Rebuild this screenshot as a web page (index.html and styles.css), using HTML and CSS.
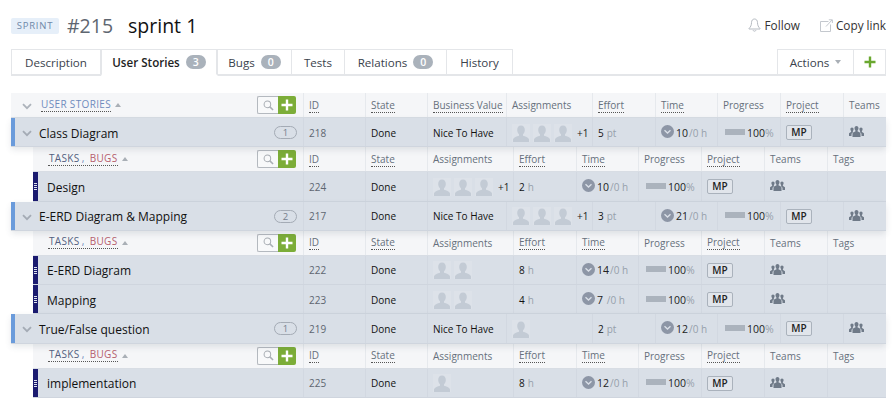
FILE: index.html
```html
<!DOCTYPE html>
<html lang="en">
<head>
<meta charset="utf-8">
<title>Sprint 1</title>
<link rel="stylesheet" href="styles.css">
</head>
<body>
<svg class="sprite" width="0" height="0" aria-hidden="true">
  <symbol id="chev" viewBox="0 0 10 7"><path d="M1 1.2 5 5.2 9 1.2" fill="none" stroke="currentColor" stroke-width="1.8"/></symbol>
  <symbol id="user" viewBox="0 0 18 18"><path d="M9 1.500c2.500 0 3.800 1.900 3.800 4.500 0 1.800-.8 3.400-1.800 4.300v1.500c2.200.8 5.300 1.500 6 3.500V18H1v-2.700c.7-2 3.800-2.700 6-3.500v-1.500C6 9.400 5.200 7.800 5.200 6c0-2.600 1.300-4.500 3.800-4.500z" fill="currentColor"/></symbol>
  <symbol id="clock" viewBox="0 0 13 13"><circle cx="6.500" cy="6.500" r="6.500" fill="currentColor"/><path d="M3.500 5.200 6.500 8 9.500 5.200" fill="none" stroke="#d9dfe7" stroke-width="1.400"/></symbol>
  <symbol id="team" viewBox="0 0 15 11"><path d="M7.500 0c1.300 0 2 1 2 2.300 0 1-.4 1.800-.9 2.300v1c1.200.4 2.600.9 2.900 1.800V11h-8V7.400c.3-.9 1.700-1.400 2.900-1.800v-1c-.5-.5-.9-1.300-.9-2.300C5.500 1 6.200 0 7.500 0z" fill="currentColor"/><path d="M3 1.500c1 0 1.600.8 1.600 1.800 0 .8-.3 1.400-.7 1.800v.8l.6.2C3.500 6.600 2.500 7.200 2.500 8.500V10H0V7.600c.2-.7 1.300-1.100 2.100-1.500V5.100C1.700 4.700 1.400 4.100 1.400 3.300 1.400 2.300 2 1.500 3 1.500zM12 1.500c1 0 1.600.8 1.600 1.800 0 .8-.3 1.400-.7 1.800v1c.8.400 1.900.800 2.100 1.500V10h-2.500V8.500c0-1.300-1-1.900-2-2.400l.6-.2v-.8c-.4-.4-.7-1-.7-1.800 0-1 .6-1.800 1.600-1.800z" fill="currentColor"/></symbol>
  <symbol id="search" viewBox="0 0 12 12"><circle cx="4.800" cy="4.800" r="3.600" fill="none" stroke="currentColor" stroke-width="1.100"/><path d="M7.500 7.500 11 11" stroke="currentColor" stroke-width="1.600"/></symbol>
  <symbol id="plus" viewBox="0 0 12 12"><path d="M6 .5v11M.5 6h11" stroke="currentColor" stroke-width="2.400"/></symbol>
  <symbol id="bell" viewBox="0 0 13 14"><path d="M6.500 1C4.500 1 3.500 2.600 3.500 4.600c0 2.500-.8 4.300-2.500 5.900V11h11v-.5C10.300 8.900 9.500 7.100 9.500 4.600 9.500 2.600 8.500 1 6.500 1zM5 12.200c.3.700.8 1 1.500 1s1.200-.3 1.500-1" fill="none" stroke="currentColor"/></symbol>
  <symbol id="link" viewBox="0 0 13 13"><path d="M8.500 2.500h-8v10h10v-7" fill="none" stroke="currentColor"/><path d="M6 7.500 12 1M8.800.8H12.400V4" fill="none" stroke="currentColor"/></symbol>
</svg>

<header class="top">
  <div class="title">
    <span class="kind">SPRINT</span>
    <span class="num">#215</span>
    <span class="name">sprint 1</span>
  </div>
  <div class="links">
    <span class="lnk follow"><svg class="ico-bell"><use href="#bell"/></svg>Follow</span>
    <span class="lnk"><svg class="ico-link"><use href="#link"/></svg>Copy link</span>
  </div>
</header>

<nav class="tabs">
  <span class="tab w-desc">Description</span>
  <span class="tab on w-us">User Stories <b class="cnt">3</b></span>
  <span class="tab w-bugs">Bugs <b class="cnt">0</b></span>
  <span class="tab w-tests">Tests</span>
  <span class="tab w-rel">Relations <b class="cnt">0</b></span>
  <span class="tab w-hist">History</span>
  <span class="tab-fill"></span>
  <span class="tab w-act">Actions <i class="caret"></i></span>
  <span class="tab w-add"><svg class="ico-add"><use href="#plus"/></svg></span>
</nav>

<main class="board">
  <div class="row us head">
    <div class="c first"><svg class="chev"><use href="#chev"/></svg><span class="ttl blue">USER STORIES</span><i class="up"></i><span class="tools"><span class="srch"><svg><use href="#search"/></svg></span><span class="add"><svg><use href="#plus"/></svg></span></span></div>
    <div class="c"><span class="sort">ID</span></div><div class="c"><span class="sort">State</span></div><div class="c"><span class="sort">Business Value</span></div><div class="c">Assignments</div><div class="c"><span class="sort">Effort</span></div><div class="c"><span class="sort">Time</span></div><div class="c">Progress</div><div class="c"><span class="sort">Project</span></div><div class="c">Teams</div>
  </div>

  <div class="row us item">
    <div class="c first"><svg class="chev"><use href="#chev"/></svg><span class="nm">Class Diagram</span><span class="pill">1</span></div>
    <div class="c id">218</div><div class="c dk">Done</div><div class="c dk">Nice To Have</div>
    <div class="c av"><svg><use href="#user"/></svg><svg><use href="#user"/></svg><svg><use href="#user"/></svg><span class="more">+1</span></div>
    <div class="c dk">5<em>pt</em></div>
    <div class="c tm"><svg><use href="#clock"/></svg><span>10</span><em>/0 h</em></div>
    <div class="c pr"><i></i>100<em>%</em></div>
    <div class="c"><span class="mp">MP</span></div>
    <div class="c tm-i"><svg><use href="#team"/></svg></div>
  </div>

  <div class="row sub head">
    <div class="c first"><span class="ttl"><span class="navy">TASKS</span><span class="comma">,</span><span class="red">BUGS</span></span><i class="up"></i><span class="tools"><span class="srch"><svg><use href="#search"/></svg></span><span class="add"><svg><use href="#plus"/></svg></span></span></div>
    <div class="c"><span class="sort">ID</span></div><div class="c"><span class="sort">State</span></div><div class="c">Assignments</div><div class="c"><span class="sort">Effort</span></div><div class="c"><span class="sort">Time</span></div><div class="c">Progress</div><div class="c"><span class="sort">Project</span></div><div class="c">Teams</div><div class="c">Tags</div>
  </div>
  <div class="row sub item">
    <div class="c first"><i class="grip"></i><span class="nm">Design</span></div>
    <div class="c id">224</div><div class="c dk">Done</div>
    <div class="c av"><svg><use href="#user"/></svg><svg><use href="#user"/></svg><svg><use href="#user"/></svg><span class="more">+1</span></div>
    <div class="c dk">2<em>h</em></div>
    <div class="c tm"><svg><use href="#clock"/></svg><span>10</span><em>/0 h</em></div>
    <div class="c pr"><i></i>100<em>%</em></div>
    <div class="c"><span class="mp">MP</span></div>
    <div class="c tm-i"><svg><use href="#team"/></svg></div><div class="c"></div>
  </div>

  <div class="row us item">
    <div class="c first"><svg class="chev"><use href="#chev"/></svg><span class="nm">E-ERD Diagram &amp; Mapping</span><span class="pill">2</span></div>
    <div class="c id">217</div><div class="c dk">Done</div><div class="c dk">Nice To Have</div>
    <div class="c av"><svg><use href="#user"/></svg><svg><use href="#user"/></svg><svg><use href="#user"/></svg><span class="more">+1</span></div>
    <div class="c dk">3<em>pt</em></div>
    <div class="c tm"><svg><use href="#clock"/></svg><span>21</span><em>/0 h</em></div>
    <div class="c pr"><i></i>100<em>%</em></div>
    <div class="c"><span class="mp">MP</span></div>
    <div class="c tm-i"><svg><use href="#team"/></svg></div>
  </div>

  <div class="row sub head">
    <div class="c first"><span class="ttl"><span class="navy">TASKS</span><span class="comma">,</span><span class="red">BUGS</span></span><i class="up"></i><span class="tools"><span class="srch"><svg><use href="#search"/></svg></span><span class="add"><svg><use href="#plus"/></svg></span></span></div>
    <div class="c"><span class="sort">ID</span></div><div class="c"><span class="sort">State</span></div><div class="c">Assignments</div><div class="c"><span class="sort">Effort</span></div><div class="c"><span class="sort">Time</span></div><div class="c">Progress</div><div class="c"><span class="sort">Project</span></div><div class="c">Teams</div><div class="c">Tags</div>
  </div>
  <div class="row sub item">
    <div class="c first"><i class="grip"></i><span class="nm">E-ERD Diagram</span></div>
    <div class="c id">222</div><div class="c dk">Done</div>
    <div class="c av"><svg><use href="#user"/></svg><svg><use href="#user"/></svg></div>
    <div class="c dk">8<em>h</em></div>
    <div class="c tm"><svg><use href="#clock"/></svg><span>14</span><em>/0 h</em></div>
    <div class="c pr"><i></i>100<em>%</em></div>
    <div class="c"><span class="mp">MP</span></div>
    <div class="c tm-i"><svg><use href="#team"/></svg></div><div class="c"></div>
  </div>
  <div class="row sub item">
    <div class="c first"><i class="grip"></i><span class="nm">Mapping</span></div>
    <div class="c id">223</div><div class="c dk">Done</div>
    <div class="c av"><svg><use href="#user"/></svg><svg><use href="#user"/></svg></div>
    <div class="c dk">4<em>h</em></div>
    <div class="c tm"><svg><use href="#clock"/></svg><span>7&nbsp;</span><em>/0 h</em></div>
    <div class="c pr"><i></i>100<em>%</em></div>
    <div class="c"><span class="mp">MP</span></div>
    <div class="c tm-i"><svg><use href="#team"/></svg></div><div class="c"></div>
  </div>

  <div class="row us item">
    <div class="c first"><svg class="chev"><use href="#chev"/></svg><span class="nm">True/False question</span><span class="pill">1</span></div>
    <div class="c id">219</div><div class="c dk">Done</div><div class="c dk">Nice To Have</div>
    <div class="c av"><svg><use href="#user"/></svg></div>
    <div class="c dk">2<em>pt</em></div>
    <div class="c tm"><svg><use href="#clock"/></svg><span>12</span><em>/0 h</em></div>
    <div class="c pr"><i></i>100<em>%</em></div>
    <div class="c"><span class="mp">MP</span></div>
    <div class="c tm-i"><svg><use href="#team"/></svg></div>
  </div>

  <div class="row sub head">
    <div class="c first"><span class="ttl"><span class="navy">TASKS</span><span class="comma">,</span><span class="red">BUGS</span></span><i class="up"></i><span class="tools"><span class="srch"><svg><use href="#search"/></svg></span><span class="add"><svg><use href="#plus"/></svg></span></span></div>
    <div class="c"><span class="sort">ID</span></div><div class="c"><span class="sort">State</span></div><div class="c">Assignments</div><div class="c"><span class="sort">Effort</span></div><div class="c"><span class="sort">Time</span></div><div class="c">Progress</div><div class="c"><span class="sort">Project</span></div><div class="c">Teams</div><div class="c">Tags</div>
  </div>
  <div class="row sub item">
    <div class="c first"><i class="grip"></i><span class="nm">implementation</span></div>
    <div class="c id">225</div><div class="c dk">Done</div>
    <div class="c av"><svg><use href="#user"/></svg></div>
    <div class="c dk">8<em>h</em></div>
    <div class="c tm"><svg><use href="#clock"/></svg><span>12</span><em>/0 h</em></div>
    <div class="c pr"><i></i>100<em>%</em></div>
    <div class="c"><span class="mp">MP</span></div>
    <div class="c tm-i"><svg><use href="#team"/></svg></div><div class="c"></div>
  </div>
</main>
</body>
</html>
```
FILE: styles.css
```css
* { box-sizing: border-box; }
html, body { margin: 0; background: #fff; }
body {
  width: 892px;
  height: 410px;
  overflow: hidden;
  padding: 0 6px 0 11px;
  font-family: "Open Sans", "Noto Sans", sans-serif;
  font-size: 10px;
  color: #222;
}
.sprite { position: absolute; }
svg { display: block; }

/* header */
.top { height: 49px; display: flex; justify-content: space-between; align-items: flex-start; }
.title { display: flex; align-items: center; height: 20px; margin-top: 16px; }
.kind {
  width: 48px; height: 16px; line-height: 16px; text-align: center;
  background: #e6eff9; color: #6f88a8; font-size: 9.500px; letter-spacing: .8px; border-radius: 2px;
}
.num { margin-left: 8px; font-size: 19.500px; color: #5e6670; line-height: 20px; }
.name { margin-left: 15px; font-size: 19.500px; color: #111; line-height: 20px; }
.links { display: flex; margin-top: 16px; font-size: 11.800px; color: #333; line-height: 18px; }
.lnk { display: flex; align-items: center; }
.follow { margin-right: 20px; }
.ico-bell { width: 13px; height: 14px; margin-right: 4px; color: #b5bac1; }
.ico-link { width: 13px; height: 13px; margin-right: 3px; color: #c4c8ce; }

/* tabs */
.tabs { display: flex; height: 27px; border-bottom: 2px solid #e4e6e9; }
.tab {
  height: 27px; display: flex; align-items: center; justify-content: center;
  font-size: 11.600px; color: #3a424c;
  border: 1px solid #e4e6e9; border-left: 0; border-bottom: 2px solid #e4e6e9; background: #fff;
}
.tab:first-child { border-left: 1px solid #e4e6e9; }
.tab.on { font-weight: 600; color: #222; border-bottom-color: #fff; border-right-width: 2px; border-left: 1px solid #e4e6e9; }
.w-desc { width: 90px; } .w-us { width: 117px; } .w-bugs { width: 74px; } .w-tests { width: 53px; }
.w-rel { width: 102px; } .w-hist { width: 66px; } .w-act { width: 77px; border-left: 1px solid #e4e6e9; } .w-add { width: 32px; }
.tab-fill { flex: 1; }
.cnt {
  margin-left: 6px; width: 20px; height: 14px; line-height: 15px; border-radius: 7px;
  background: #aab2bb; color: #fff; font-size: 10.500px; font-weight: 600; text-align: center;
}
.caret { margin-left: 6px; width: 0; height: 0; border: 3px solid transparent; border-top: 4px solid #a9afb6; border-bottom: 0; }
.ico-add { width: 12px; height: 12px; color: #6aa82f; }

/* board */
.board { margin-top: 17px; }
.row { display: grid; }
.us { grid-template-columns: 292px 62px 62px 79px 86px 63px 62px 63px 63px 43px; }
.sub { grid-template-columns: 270px 62px 62px 86px 63px 62px 63px 63px 63px 59px; margin-left: 22px; }
.head { height: 25px; background: #f5f6f8; color: #66707c; border-bottom: 1px solid #d8dde4; }
.item { height: 29.250px; background: #d9dfe7; color: #222; border-bottom: 1px solid #cfd5de; }
.us.item { position: relative; z-index: 1; box-shadow: 0 3px 6px rgba(60, 70, 90, .12); }
.c { display: flex; align-items: center; padding-left: 5px; border-left: 1px solid #e6e9ed; min-width: 0; white-space: nowrap; }
.item .c { border-left-color: #d2d8e1; padding-top: 1px; }
.c.first { position: relative; border-left: 0; padding-left: 0; }

.sort { border-bottom: 1px dotted #555; line-height: 13px; margin-bottom: -1px; }
.chev { width: 10px; height: 7px; margin: 2px 8px 0 11px; color: #a4abb5; flex: none; }
.head.us .chev { color: #adb3bb; }
.ttl { font-size: 10px; letter-spacing: .35px; border-bottom: 1px dotted #555; line-height: 13px; }
.head.sub .ttl { margin-left: 15px; display: flex; margin-top: -1px; }
.blue { color: #6f8bbd; margin-left: 1px; margin-top: -1px; }
.navy { color: #535f80; margin-left: 1px; }
.red { color: #b5606e; }
.comma { color: #6f8bbd; margin: 0 5px 0 2px; }
.up { margin-left: 4px; width: 0; height: 0; border: 3.500px solid transparent; border-bottom: 4px solid #a9afb6; border-top: 0; }
.tools { margin-left: auto; margin-right: 7px; display: flex; height: 18px; }
.srch {
  width: 21px; height: 18px; border: 1px solid #b4b9bf; border-right: 0; border-radius: 2px 0 0 2px;
  background: #f8f9fa; color: #a9aeb4; display: flex; align-items: center; justify-content: center;
}
.srch svg { width: 11px; height: 11px; }
.add {
  width: 18px; height: 18px; background: #7cad38; border-radius: 0 2px 2px 0; color: #fff;
  display: flex; align-items: center; justify-content: center;
}
.add svg { width: 12px; height: 12px; }

.nm { font-size: 12px; color: #111; padding-top: 1px; }
.us.item .first { border-left: 4px solid #6a9bdb; }
.us.item .chev { margin: 2px 7px 0 7px; }
.sub.item .nm { margin-left: 9px; padding-top: 2px; }
.grip {
  width: 5px; align-self: stretch; background: #1b1b70; position: relative; flex: none;
}
.sub.item .first { padding-top: 0; }
.grip::after {
  content: ""; position: absolute; left: 1px; top: 11px; width: 3px; height: 7px;
  background: repeating-linear-gradient(#dfe3ef 0 1px, transparent 1px 2px);
}
.pill {
  margin-left: auto; margin-right: 6px; width: 23px; height: 13px; line-height: 12px; text-align: center;
  border: 1px solid #a4abb5; border-radius: 7px; color: #76808c; font-size: 9.500px;
}
.id { color: #5e6670; }
.dk { color: #111; }
em { font-style: normal; color: #96a0ab; }
.dk em { margin-left: 3px; }
.av { color: #c3cbd5; }
.av svg { width: 18px; height: 18px; margin-right: 3px; background: #dde2e9; flex: none; }
.more { color: #222; margin-left: 2px; }
.tm svg { width: 13px; height: 13px; color: #8d96a6; margin: -2px 2px 0 0; flex: none; }
.tm span { color: #222; font-size: 10.500px; }
.tm em { margin-left: 1px; }
.pr i { width: 20px; height: 6px; background: #abb3bd; margin: -2px 2px 0 2px; }
.pr { color: #222; font-size: 10.500px; }
.mp {
  width: 26px; height: 15px; line-height: 13px; text-align: center; font-weight: 600;
  border: 1px solid #aab2bc; border-radius: 2px; color: #222; font-size: 10px; background: #e1e5eb;
}
.tm-i svg { width: 15px; height: 11px; color: #6f7a88; margin-top: -2px; }
```
